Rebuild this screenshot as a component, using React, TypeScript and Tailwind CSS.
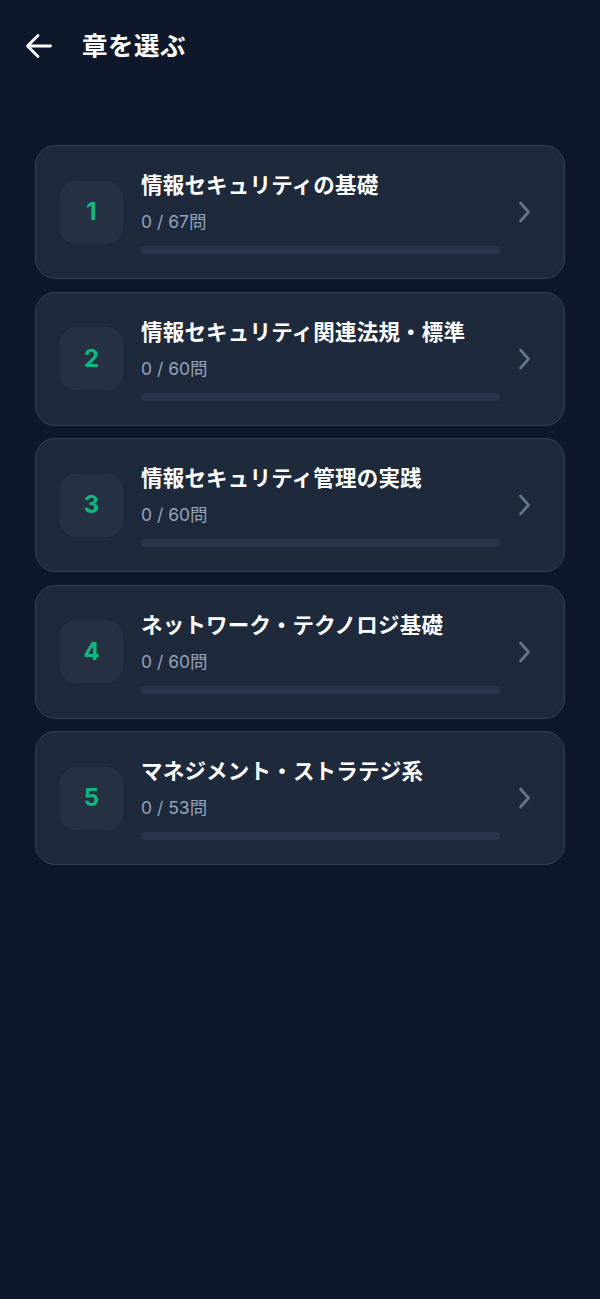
import React from "react";

const chapters = [
  { n: 1, title: "情報セキュリティの基礎", total: 67 },
  { n: 2, title: "情報セキュリティ関連法規・標準", total: 60 },
  { n: 3, title: "情報セキュリティ管理の実践", total: 60 },
  { n: 4, title: "ネットワーク・テクノロジ基礎", total: 60 },
  { n: 5, title: "マネジメント・ストラテジ系", total: 53 },
];

export default function App() {
  return (
    <div
      className="min-h-[1299px] w-full bg-[#0f172a] text-white"
      style={{ fontFamily: '"Inter", "Noto Sans CJK JP", sans-serif' }}
    >
      <header className="flex h-[92px] items-center pl-[25px]">
        <button className="flex h-[28px] w-[28px] items-center justify-center">
          <svg width="28" height="28" viewBox="0 0 28 28" fill="none">
            <path
              d="M25.5 14H3M13 3.5L2.5 14L13 24.5"
              stroke="white"
              strokeWidth="2.8"
              strokeLinecap="round"
              strokeLinejoin="round"
            />
          </svg>
        </button>
        <h1 className="ml-[29px] text-[25.5px] font-bold leading-none tracking-[0.5px]">章を選ぶ</h1>
      </header>

      <div className="mt-[53px] flex flex-col gap-[12.5px] px-[35px]">
        {chapters.map((c) => (
          <div
            key={c.n}
            className="flex h-[134px] items-center rounded-[20px] border border-[#334155] bg-[#1e293b] pl-[24px] pr-[27px]"
          >
            <div className="flex h-[63px] w-[63px] shrink-0 items-center justify-center rounded-[16px] bg-[#263244]">
              <span className="text-[24px] font-bold text-[#10b981]">{c.n}</span>
            </div>
            <div className="ml-[18px] flex flex-1 flex-col">
              <div className="text-[21.5px] font-bold leading-[30px] tracking-[0.2px] text-white">{c.title}</div>
              <div className="mt-[10px] text-[17.5px] leading-[24px] text-[#94a3b8]">0 / {c.total}問</div>
              <div className="mt-[12px] h-[8px] w-full rounded-full bg-[#29354a]" />
            </div>
            <div className="ml-[13px] flex h-[24px] w-[24px] shrink-0 items-center justify-center">
              <svg width="24" height="24" viewBox="0 0 24 24" fill="none">
                <path
                  d="M7.5 3L15.5 12L7.5 21"
                  stroke="#64748b"
                  strokeWidth="2.8"
                  strokeLinecap="round"
                  strokeLinejoin="round"
                />
              </svg>
            </div>
          </div>
        ))}
      </div>
    </div>
  );
}
